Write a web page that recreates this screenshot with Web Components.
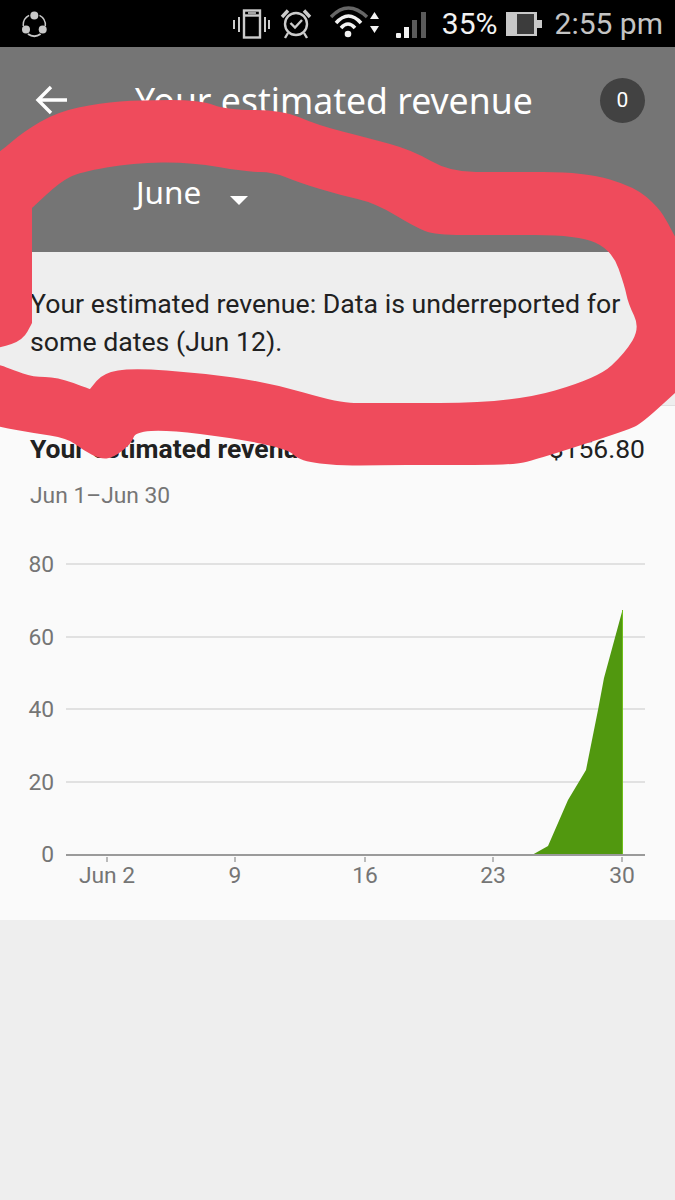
<!DOCTYPE html>
<html>
<head>
<meta charset="utf-8">
<title>Your estimated revenue</title>
<style>
    html, body { margin: 0; padding: 0; background: #eeeeee; }
    body { width: 675px; height: 1200px; overflow: hidden; position: relative; font-family: Roboto, sans-serif; }
</style>
</head>
<body>
<status-bar></status-bar>
<app-header title-text="Your estimated revenue" month="June" count="0"></app-header>
<notice-box>Your estimated revenue: Data is underreported for some dates (Jun 12).</notice-box>
<revenue-card label="Your estimated revenue" amount="$156.80" range="Jun 1–Jun 30">
    <revenue-chart></revenue-chart>
</revenue-card>
<scribble-mark></scribble-mark>

<script>
class StatusBar extends HTMLElement {
    constructor() {
        super();
        this.attachShadow({ mode: 'open' });
    }

    connectedCallback() {
        this.shadowRoot.innerHTML = /*html*/ `
        <style>
            :host { display: flex; align-items: center; height: 47px; background: #000; padding: 0 12px 0 22px; box-sizing: border-box; }
            svg { display: block; flex: none; }
            .spacer { flex: 1; }
            .pct { font: 30px/47px Roboto, sans-serif; color: #f2f2f2; margin: 0 8px 0 16px; }
            .time { font: 30px/47px Roboto, sans-serif; color: #c4c4c4; margin-left: 13px; }
        </style>
        <svg width="25" height="28" viewBox="0 0 25 28" fill="#c8c8c8">
            <circle cx="12.3" cy="5.5" r="4"/><circle cx="4" cy="19.5" r="4"/><circle cx="20.7" cy="19.5" r="4"/>
            <path d="M7.1 5.3 A11 11 0 0 0 1.3 16" fill="none" stroke="#c8c8c8" stroke-width="1.5"/>
            <path d="M17.5 5.3 A11 11 0 0 1 23.3 16" fill="none" stroke="#c8c8c8" stroke-width="1.5"/>
            <path d="M6 24 A11 11 0 0 0 18.6 24" fill="none" stroke="#c8c8c8" stroke-width="2"/>
        </svg>
        <div class="spacer"></div>
        <svg width="38" height="30" viewBox="0 0 38 30" fill="none" stroke="#cccccc" stroke-width="2.4">
            <rect x="12" y="1.5" width="16" height="27"/>
            <path d="M12 6.5 H28"/>
            <path d="M16 4 H24" stroke-width="1.6"/>
            <path d="M7 8 V23 M2 11 V20 M33 8 V23 M37 11 V20" stroke-width="2"/>
        </svg>
        <svg width="34" height="32" viewBox="0 0 34 32" fill="none" stroke="#cccccc" stroke-width="2.4" style="margin-left:9px">
            <circle cx="17" cy="16" r="11"/>
            <path d="M11.5 15 L16 19.5 L23 12"/>
            <path d="M3 9 L9 2.5 M31 9 L25 2.5" stroke-width="3.4"/>
            <path d="M9 25 L6 30 M25 25 L28 30"/>
        </svg>
        <svg width="50" height="35" viewBox="0 0 50 35" fill="none" style="margin-left:17px">
            <path d="M1 11 Q18 -7 37 11" stroke="#666666" stroke-width="3.5"/>
            <path d="M6 17 Q18.5 3 31 17" stroke="#f2f2f2" stroke-width="3.5"/>
            <path d="M11 22 Q18 14 25 22" stroke="#f2f2f2" stroke-width="3.5"/>
            <circle cx="18" cy="28" r="3.3" fill="#f2f2f2"/>
            <path d="M40 13 L44.5 6 L49 13 Z M40 20 L44.5 27 L49 20 Z" fill="#f2f2f2"/>
        </svg>
        <svg width="30" height="30" viewBox="0 0 30 30" style="margin-left:16px">
            <rect x="0" y="24" width="5" height="5" rx="1" fill="#f2f2f2"/>
            <rect x="8" y="18" width="5" height="11" fill="#f2f2f2"/>
            <rect x="16" y="11" width="5" height="18" fill="#5a5a5a"/>
            <rect x="25" y="3" width="5" height="26" fill="#5a5a5a"/>
        </svg>
        <span class="pct">35%</span>
        <svg width="36" height="26" viewBox="0 0 36 26">
            <rect x="0" y="1" width="31" height="24" fill="#c8c8c8"/>
            <rect x="11" y="3" width="17" height="20" fill="#3c3c3c"/>
            <rect x="31" y="9" width="5" height="8" fill="#c8c8c8"/>
        </svg>
        <span class="time">2:55 pm</span>
        `;
    }
}
customElements.define('status-bar', StatusBar);

class AppHeader extends HTMLElement {
    constructor() {
        super();
        this.attachShadow({ mode: 'open' });
    }

    connectedCallback() {
        this.shadowRoot.innerHTML = /*html*/ `
        <style>
            :host { display: block; height: 205px; box-sizing: border-box; background: #757575; color: #fff; padding: 25px 30px 0 35px; }
            .bar { display: flex; align-items: center; height: 56px; }
            .back { flex: none; width: 100px; }
            .back svg { display: block; }
            h1 { flex: 1; margin: 0; font: 400 35.6px/56px "Noto Sans", sans-serif; white-space: nowrap; }
            .count { flex: none; width: 45px; height: 45px; border-radius: 50%; background: #424242; display: flex; align-items: center; justify-content: center; font: 21px Roboto, sans-serif; }
            .month { display: flex; align-items: flex-start; margin: 42px 0 0 101px; font: 400 31.5px/44px "Noto Sans", sans-serif; }
            .caret { width: 0; height: 0; margin: 26px 0 0 29px; border-left: 9px solid transparent; border-right: 9px solid transparent; border-top: 9px solid #fff; }
        </style>
        <div class="bar">
            <div class="back">
                <svg width="32" height="32" viewBox="0 0 32 32" fill="none" stroke="#fff" stroke-width="3.4">
                    <path d="M32 16 H3 M16 3 L3 16 L16 29"/>
                </svg>
            </div>
            <h1>${this.getAttribute('title-text')}</h1>
            <div class="count">${this.getAttribute('count')}</div>
        </div>
        <div class="month"><span>${this.getAttribute('month')}</span><span class="caret"></span></div>
        `;
    }
}
customElements.define('app-header', AppHeader);

class NoticeBox extends HTMLElement {
    constructor() {
        super();
        this.attachShadow({ mode: 'open' });
        this.shadowRoot.innerHTML = /*html*/ `
        <style>
            :host { display: block; height: 153px; box-sizing: border-box; background: #eeeeee; color: #212121; padding: 33px 30px 0 30px; font: 400 26.7px/38px Roboto, sans-serif; }
        </style>
        <slot></slot>
        `;
    }
}
customElements.define('notice-box', NoticeBox);

class RevenueCard extends HTMLElement {
    constructor() {
        super();
        this.attachShadow({ mode: 'open' });
    }

    connectedCallback() {
        this.shadowRoot.innerHTML = /*html*/ `
        <style>
            :host { display: block; height: 515px; box-sizing: border-box; background: #fafafa; border-top: 1px solid #e0e0e0; padding: 26px 30px 0 30px; }
            .row { display: flex; justify-content: space-between; font: 400 26.5px/34px Roboto, sans-serif; color: #212121; }
            .row b { font-weight: 700; }
            .range { margin-top: 14px; font: 400 22.8px/32px Roboto, sans-serif; color: #757575; }
            ::slotted(revenue-chart) { margin: 28px -30px 0 -30px; }
        </style>
        <div class="row"><b>${this.getAttribute('label')}</b><span>${this.getAttribute('amount')}</span></div>
        <div class="range">${this.getAttribute('range')}</div>
        <slot></slot>
        `;
    }
}
customElements.define('revenue-card', RevenueCard);

class RevenueChart extends HTMLElement {
    constructor() {
        super();
        this.attachShadow({ mode: 'open' });
    }

    connectedCallback() {
        const grid = [[80, 564], [60, 637], [40, 709], [20, 782]];
        const ticks = [['Jun 2', 107], ['9', 235], ['16', 365], ['23', 493], ['30', 622]];
        const top = 540; // page y of the svg's top edge

        const rows = grid.map(([label, y]) => `
            <line x1="66" x2="645" y1="${y - top}" y2="${y - top}" stroke="#d8d8d8" stroke-width="1.4"/>
            <text x="54" y="${y - top + 8}" text-anchor="end">${label}</text>`).join('');
        const cols = ticks.map(([label, x]) => `
            <line x1="${x}" x2="${x}" y1="${857 - top}" y2="${862 - top}" stroke="#9e9e9e" stroke-width="1.4"/>
            <text x="${x}" y="${883 - top}" text-anchor="middle">${label}</text>`).join('');

        this.shadowRoot.innerHTML = /*html*/ `
        <style>
            :host { display: block; }
            svg { display: block; }
            text { font: 400 22.8px Roboto, sans-serif; fill: #757575; }
        </style>
        <svg width="675" height="360" viewBox="0 0 675 360">
            ${rows}
            <polygon points="532,${855 - top} 548,${846 - top} 568,${800 - top} 586,${770 - top} 598,${710 - top} 604,${678 - top} 622.5,${610 - top} 622.5,${855 - top}" fill="#51980f"/>
            <line x1="622.5" x2="622.5" y1="${610 - top}" y2="${855 - top}" stroke="#6fc01a" stroke-width="1"/>
            <line x1="66" x2="645" y1="${855 - top}" y2="${855 - top}" stroke="#9a9a9a" stroke-width="2"/>
            <text x="54" y="${855 - top + 7}" text-anchor="end">0</text>
            ${cols}
        </svg>
        `;
    }
}
customElements.define('revenue-chart', RevenueChart);

// the red marker scribble someone drew on top of the screenshot
class ScribbleMark extends HTMLElement {
    constructor() {
        super();
        this.attachShadow({ mode: 'open' });
        const outline = [
            [-30,172],[0,152],[23,132],[57,112],[100,103],[140,100],[200,100],[227,110],[283,110],[317,125],[368,138],[412,150],[450,172],
            [502,172],[585,172],[635,187],[658,207],[668,223],[675,237],[700,280],[700,370],[675,393],[642,423],[628,430],[535,460],[512,465],[435,465],
            [378,465],[340,466],[300,461],[288,449],[233,438],[167,430],[135,432],[132,443],[113,458],[100,459],[83,450],[67,438],[33,433],
            [0,427],[-30,420],[-30,358],[0,365],[13,370],[33,377],[57,377],[90,389],[90,389],[103,373],[133,368],[200,373],[267,382],[340,403],[368,403],[512,403],
            [598,378],[625,353],[640,328],[628,303],[625,287],[612,250],[578,235],[492,235],[435,235],[415,227],[375,203],[340,195],
            [300,183],[273,172],[247,172],[190,162],[133,163],[80,172],[60,182],[32,208],[32,208],[32,323],[32,323],[23,340],[0,348],[-30,352]
        ];
        // quadratic curves through the midpoints so the edge looks hand drawn
        const mid = (a, b) => `${(a[0] + b[0]) / 2} ${(a[1] + b[1]) / 2}`;
        let d = `M${mid(outline[outline.length - 1], outline[0])}`;
        outline.forEach((p, i) => {
            d += ` Q${p[0]} ${p[1]} ${mid(p, outline[(i + 1) % outline.length])}`;
        });
        this.shadowRoot.innerHTML = /*html*/ `
        <style>
            :host { display: block; position: absolute; left: 0; top: 0; width: 675px; height: 500px; pointer-events: none; }
            svg { display: block; }
        </style>
        <svg width="675" height="500" viewBox="0 0 675 500">
            <path d="${d} Z" fill="#ef4b5c"/>
        </svg>
        `;
    }
}
customElements.define('scribble-mark', ScribbleMark);
</script>
</body>
</html>
